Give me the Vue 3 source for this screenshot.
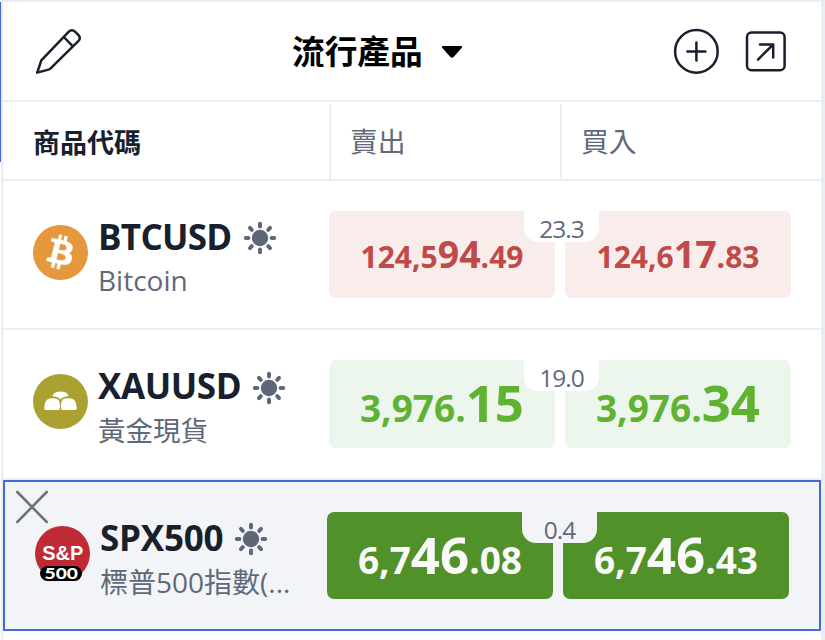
<script setup>
const rows = [
  {
    id: 'btc', symbol: 'BTCUSD', name: 'Bitcoin', spread: '23.3', tone: 'down',
    sell: ['124,5', '94', '.49'], buy: ['124,6', '17', '.83'],
  },
  {
    id: 'xau', symbol: 'XAUUSD', name: '黃金現貨', spread: '19.0', tone: 'up',
    sell: ['3,976.', '15', ''], buy: ['3,976.', '34', ''],
  },
  {
    id: 'spx', symbol: 'SPX500', name: '標普500指數(...', spread: '0.4', tone: 'solid',
    sell: ['6,7', '46', '.08'], buy: ['6,7', '46', '.43'],
  },
]
const rays = [0, 45, 90, 135, 180, 225, 270, 315]
</script>

<template>
  <div class="page">
    <div class="accent"></div>
    <main class="panel">
      <header class="toolbar">
        <svg class="pencil" width="48" height="48" viewBox="0 0 48 48">
          <path d="M3.2 38.6 L7.3 26.4 L34.6 -2.2 Q38 -5.2 41.3 -2.2 L44.3 .8 Q47.3 4 44.3 7.2 L16.3 34.6 Q15.5 35.3 14.5 35.6Z M29.8 3 L38.2 11.6" transform="translate(0 8)" />
        </svg>
        <button class="title">
          <span>流行產品</span>
          <svg width="22" height="14" viewBox="0 0 22 14"><path d="M2.2 1H19.8Q22 1.2 20.6 3L12.6 12Q11 13.4 9.4 12L1.4 3Q0 1.2 2.2 1Z" /></svg>
        </button>
        <svg class="add" width="46" height="46" viewBox="0 0 46 46">
          <circle cx="23.4" cy="23.4" r="21.3" /><path d="M14.4 23.4H32.4M23.4 14.4V32.4" />
        </svg>
        <svg class="open" width="42" height="42" viewBox="0 0 42 42">
          <rect x="2" y="2.6" width="37.6" height="37.6" rx="4.5" /><path d="M13 29.6L27.8 14.8M15 14.6H28.2V27.6" />
        </svg>
      </header>

      <div class="columns">
        <div class="col first">商品代碼</div>
        <div class="col">賣出</div>
        <div class="col last">買入</div>
      </div>

      <section v-for="r in rows" :key="r.id" class="row" :class="[r.tone, r.id]">
        <svg v-if="r.tone === 'solid'" class="close" width="34" height="34" viewBox="0 0 34 34">
          <path d="M2.3 2L31.7 32M31.7 2L2.3 32" />
        </svg>

        <svg class="logo" width="55" height="55" viewBox="0 0 55 55">
          <template v-if="r.id === 'btc'">
            <circle cx="27.5" cy="27.5" r="27.5" fill="#e5983d" />
            <path transform="translate(-.2 -.2) scale(2.3)" fill="#fff" stroke="#fff" stroke-width=".12" fill-rule="evenodd" d="M17.288 10.291c.24-1.59-.974-2.45-2.64-3.03l.54-2.153-1.315-.33-.525 2.107c-.345-.087-.705-.167-1.064-.25l.526-2.127-1.32-.33-.54 2.165c-.285-.067-.565-.132-.84-.2l-1.815-.45-.35 1.407s.975.225.955.236c.535.136.63.486.615.766l-1.477 5.92c-.075.166-.24.406-.614.314.015.02-.96-.24-.96-.24l-.66 1.51 1.71.426.93.242-.54 2.19 1.32.327.54-2.17c.36.1.705.19 1.05.273l-.51 2.154 1.32.33.545-2.19c2.24.427 3.93.257 4.64-1.774.57-1.637-.03-2.58-1.217-3.196.854-.193 1.5-.76 1.68-1.93h.01zm-3.01 4.22c-.404 1.64-3.157.75-4.05.53l.72-2.9c.896.23 3.757.67 3.33 2.37zm.41-4.24c-.37 1.49-2.662.735-3.405.55l.654-2.64c.744.18 3.137.524 2.75 2.084v.006z" />
          </template>
          <template v-else-if="r.id === 'xau'">
            <circle cx="27.5" cy="27.5" r="27.5" fill="#aba131" />
            <g fill="#fff">
              <path d="M19.3 22.3Q20.5 19 23.2 18.1Q27.5 17 31.8 18.1Q34.5 19 35.7 22.3Q30.5 22.3 27.5 25.3Q24.5 22.3 19.3 22.3Z" />
              <path d="M11.2 34.2Q11.5 28.5 14 25.8Q15.5 24.4 18.5 24.2Q23.5 24 25.3 25.5Q26.6 27 27 31.5Q27.3 34.4 26.2 36H12.8Q11.1 36 11.2 34.2Z" />
              <path d="M43.8 34.2Q43.5 28.5 41 25.8Q39.5 24.4 36.5 24.2Q31.5 24 29.7 25.5Q28.4 27 28 31.5Q27.7 34.4 28.8 36H42.2Q43.9 36 43.8 34.2Z" />
            </g>
          </template>
          <template v-else>
            <circle cx="27.5" cy="27.5" r="27.5" fill="#c02a35" />
            <text class="sp" x="7.2" y="34.3" textLength="41" lengthAdjust="spacingAndGlyphs">S&amp;P</text>
            <rect x="5" y="40" width="42" height="15" rx="7.5" fill="#000" />
            <text class="five" x="9.5" y="53.2" textLength="33.5" lengthAdjust="spacingAndGlyphs">500</text>
          </template>
        </svg>

        <div class="names">
          <div class="symbol">
            <span class="ticker">{{ r.symbol }}</span>
            <svg class="sun" width="34" height="34" viewBox="-17 -17 34 34">
              <circle r="6.2" />
              <path v-for="a in rays" :key="a" d="M0 -11.6V-14.2" :transform="`rotate(${a})`" />
            </svg>
          </div>
          <div class="name">{{ r.name }}</div>
        </div>

        <div class="quotes">
          <button v-for="side in ['sell', 'buy']" :key="side" class="quote">
            <span class="num">{{ r[side][0] }}<b>{{ r[side][1] }}</b>{{ r[side][2] }}</span>
          </button>
          <div class="spread">{{ r.spread }}</div>
        </div>
      </section>
    </main>
  </div>
</template>

<style>
body { background: #fff; }
</style>

<style scoped>
* { box-sizing: border-box; }
.page {
  position: relative;
  width: 825px;
  height: 640px;
  padding-left: 1px;
  background: #fff;
  font-family: "Open Sans", "Noto Sans CJK TC", sans-serif;
  color: #18202d;
  overflow: hidden;
}
.accent { position: absolute; left: 0; top: 2px; width: 1px; height: 160px; background: #4466d8; }
.panel {
  height: 640px;
  border: solid #eaedf2;
  border-width: 2px 4px 0 2px;
}
button { border: 0; padding: 0; background: none; font: inherit; color: inherit; text-align: left; }
.toolbar { display: flex; height: 100px; border-bottom: 2px solid #eaedf2; }
.toolbar svg { flex: none; fill: none; stroke: #18202d; stroke-width: 2.5; stroke-linecap: round; stroke-linejoin: round; }
.pencil { margin: 24px 0 0 31px; overflow: visible; }
.title { display: flex; width: 380px; margin-left: 210px; height: 98px; }
.title span { width: 149px; margin-top: 25px; font-size: 32.7px; line-height: 50px; font-weight: 700; color: #000; }
.toolbar .title svg { margin-top: 43px; fill: #000; stroke: none; }
.add { margin: 26px 0 0 1px; }
.open { margin: 28px 0 0 26px; }

.columns { display: flex; height: 79px; padding-top: 2px; border-bottom: 2px solid #eaedf2; }
.col { width: 231px; padding-left: 19px; border-left: 2px solid #eaedf2; font-size: 27.8px; line-height: 74px; color: #606a7b; }
.col.first { width: 326px; padding-left: 30px; border: 0; font-size: 27px; line-height: 77px; font-weight: 700; color: #18202d; }
.col.last { width: 261px; }

.row { position: relative; display: flex; height: 149px; padding: 30px; border-bottom: 2px solid #eaedf2; }
.xau { height: 150px; }
.spx { height: 151px; border: 2px solid #4668d8; background: #f3f4f8; }
.close { position: absolute; left: 10px; top: 8px; stroke: #6b7482; stroke-width: 2.6; stroke-linecap: round; }
.logo { flex: none; margin-top: 14px; overflow: visible; }
.sp { font: 700 19.5px "Liberation Sans", sans-serif; fill: #fff; }
.five { font: 900 15.5px Lato, sans-serif; fill: #fff; }

.names { flex: 1; padding-left: 10px; min-width: 0; white-space: nowrap; }
.symbol { display: flex; height: 50px; padding-top: 6px; font-size: 35px; line-height: 40px; font-weight: 700; }
.ticker { letter-spacing: -.7px; }
.xau .ticker { letter-spacing: -.4px; }
.spx .ticker { letter-spacing: -.2px; }
.sun { margin: 4px 0 0 11px; fill: #5e6777; stroke: #5e6777; stroke-width: 4; stroke-linecap: round; }
.xau .sun { margin-top: 5px; }
.name { font-size: 28px; line-height: 39px; color: #5f697a; }
.xau .name { font-size: 27.5px; line-height: 42px; }
.spx .name { line-height: 41px; }

.quotes { position: relative; flex: none; display: flex; gap: 10px; }
.quote { width: 226px; height: 87px; border-radius: 7px; background: #f9edec; color: #c04a48; padding-top: 16px; display: flex; justify-content: center; align-items: flex-start; }
.num { font-size: 30px; line-height: 60px; font-weight: 700; white-space: nowrap; }
.num b { font-size: 37.5px; line-height: 0; font-weight: 700; }
.up .quote { height: 88px; padding-top: 18px; background: #ecf6ec; color: #60b232; }
.up .num, .solid .num { font-size: 37px; }
.up .num b, .solid .num b { font-size: 51px; }
.solid .quote { padding-top: 18px; background: #50912a; color: #fafafa; }
.spread {
  position: absolute; left: 195px; top: 0; width: 75px; height: 31px;
  border-radius: 0 0 14px 14px; background: #fff; text-align: center;
  font-size: 24.5px; line-height: 35px; letter-spacing: -1px; color: #606a7b;
}
.solid .spread { background: #f3f4f8; }
</style>
